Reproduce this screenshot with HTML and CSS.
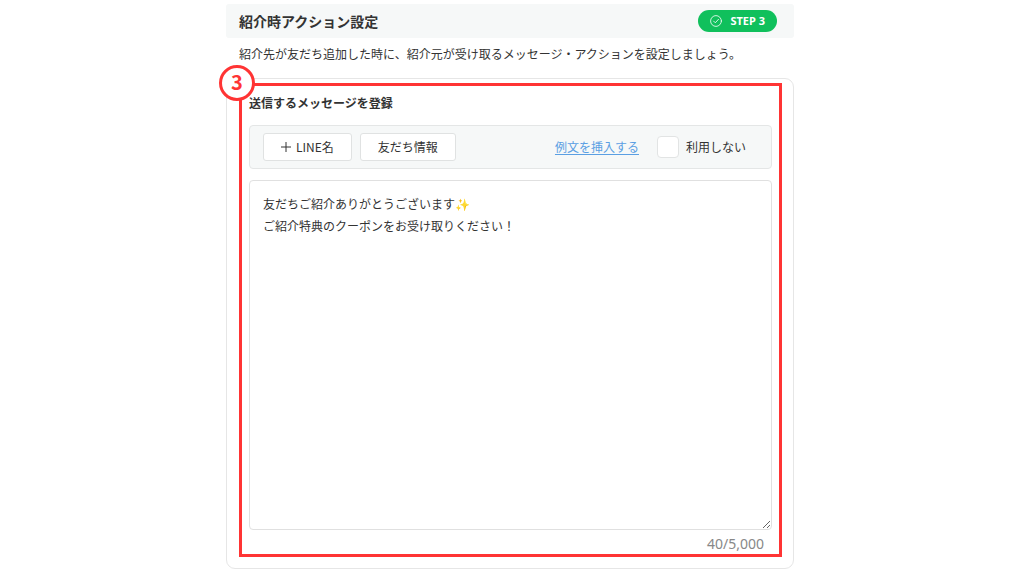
FILE: index.html
```html
<!DOCTYPE html>
<html lang="ja">
<head>
    <meta charset="UTF-8">
    <meta name="viewport" content="width=device-width, initial-scale=1.0">
    <title>紹介時アクション設定</title>
    <link rel="stylesheet" href="styles.css">
</head>
<body>
    <main class="container">
        <header class="section-header">
            <h1>紹介時アクション設定</h1>
            <span class="step-badge">
                <svg class="check-icon" viewBox="0 0 12 12" aria-hidden="true">
                    <circle cx="6" cy="6" r="5.4"/>
                    <path d="M3.6 6.1l1.7 1.7 3.2-3.5"/>
                </svg>
                STEP 3
            </span>
        </header>
        <p class="description">紹介先が友だち追加した時に、紹介元が受け取るメッセージ・アクションを設定しましょう。</p>

        <section class="card">
            <div class="highlight"><span class="highlight-number">3</span></div>

            <h2><label for="message">送信するメッセージを登録</label></h2>
            <div class="toolbar">
                <button type="button" class="line-btn">
                    <svg class="plus-icon" viewBox="0 0 10 10" aria-hidden="true"><path d="M5 0v10M0 5h10"/></svg>
                    LINE名
                </button>
                <button type="button">友だち情報</button>
                <a href="#" class="example-link">例文を挿入する</a>
                <label class="disable-option"><input type="checkbox" id="disable">利用しない</label>
            </div>
            <textarea id="message">友だちご紹介ありがとうございます✨
ご紹介特典のクーポンをお受け取りください！</textarea>
            <div class="counter">40/5,000</div>
        </section>
    </main>
</body>
</html>
```

FILE: styles.css
```css
* {
    box-sizing: border-box;
}
body {
    margin: 0;
    padding: 4px 4px 4px 0;
    background-color: #fff;
    color: #333;
    font-family: "Noto Sans CJK JP", "Noto Sans", sans-serif;
    font-size: 12px;
    line-height: 20px;
}
.container {
    max-width: 568px;
    margin: 0 auto;
}
.section-header {
    display: flex;
    align-items: center;
    justify-content: space-between;
    padding: 6px 17px 6px 13px;
    background-color: #f6f8f8;
    border-radius: 3px;
}
h1 {
    margin: 0;
    font-size: 14px;
    line-height: 20px;
}
.step-badge {
    display: flex;
    align-items: center;
    gap: 8px;
    padding: 1px 12px;
    border-radius: 11px;
    background-color: #10c05c;
    color: #fff;
    font-family: "Noto Sans", sans-serif;
    font-size: 11px;
    font-weight: bold;
}
.check-icon {
    width: 12px;
    height: 12px;
    fill: none;
    stroke: #fff;
    stroke-width: 0.8;
    stroke-linecap: round;
    stroke-linejoin: round;
}
.description {
    margin: 6px 13px 14px;
}
.card {
    position: relative;
    padding: 14px 21px 14px 22px;
    border: 1px solid #e6e6e6;
    border-radius: 9px;
}
h2 {
    margin: 0 0 12px;
    font-size: 12px;
    line-height: 20px;
}
/* red frame drawn over the card */
.highlight {
    position: absolute;
    top: 4px;
    right: 11px;
    bottom: 11px;
    left: 12px;
    border: 3px solid #ff3434;
    pointer-events: none;
}
.highlight-number {
    position: absolute;
    top: -21px;
    left: -23px;
    width: 36px;
    height: 36px;
    border: 3px solid #ff3434;
    border-radius: 50%;
    background-color: #fff;
    color: #ff3434;
    font-size: 20px;
    font-weight: bold;
    line-height: 28px;
    text-align: center;
}
.toolbar {
    display: flex;
    align-items: center;
    padding: 7px 25px 7px 13px;
    border: 1px solid #e4e6e6;
    border-radius: 4px;
    background-color: #f6f8f8;
}
button {
    height: 28px;
    margin-right: 8px;
    padding: 0 17px;
    border: 1px solid #e0e2e2;
    border-radius: 3px;
    background-color: #fff;
    color: #333;
    font: inherit;
    cursor: pointer;
}
.line-btn {
    display: flex;
    align-items: center;
    gap: 5px;
}
.plus-icon {
    width: 10px;
    height: 10px;
    fill: none;
    stroke: #333;
    stroke-width: 1;
}
.example-link {
    margin-left: auto;
    color: #5b9fe3;
    text-underline-offset: 2px;
}
.disable-option {
    display: flex;
    align-items: center;
    gap: 7px;
    margin-left: 18px;
}
input {
    appearance: none;
    width: 22px;
    height: 22px;
    margin: 0;
    border: 1px solid #e2e4e4;
    border-radius: 4px;
    background-color: #fff;
}
input:checked {
    background-color: #10c05c;
}
textarea {
    display: block;
    width: 100%;
    height: 350px;
    margin-top: 11px;
    padding: 12px 13px;
    border: 1px solid #e0e0e0;
    border-radius: 4px;
    color: #333;
    font: inherit;
    line-height: 22px;
}
.counter {
    margin-top: 4px;
    padding-right: 8px;
    color: #888;
    font-family: "Noto Sans", sans-serif;
    font-size: 14px;
    text-align: right;
}
```
